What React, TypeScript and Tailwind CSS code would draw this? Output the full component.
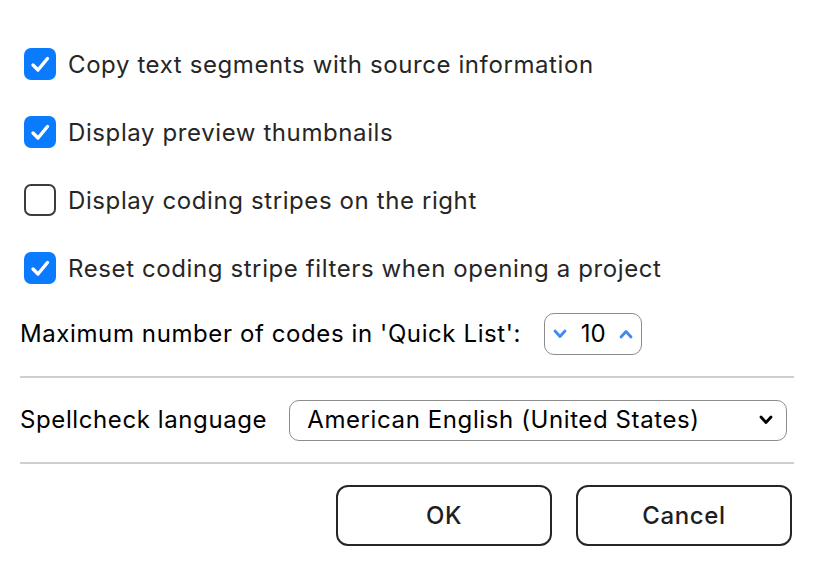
import React, { useState } from "react";

const font = { fontFamily: "Inter, 'Noto Sans', sans-serif" };

const Check = ({ checked, onClick }: { checked: boolean; onClick: () => void }) => (
  <div
    onClick={onClick}
    className={
      checked
        ? "flex h-8 w-8 shrink-0 cursor-pointer items-center justify-center rounded-[7px] bg-[#0a7aff]"
        : "h-8 w-8 shrink-0 cursor-pointer rounded-[7px] border-2 border-[#3c3c3c] bg-white"
    }
  >
    {checked && (
      <svg width="24" height="24" viewBox="0 0 24 24" fill="none">
        <polyline
          points="5,13 10,18 19.5,6.5"
          stroke="white"
          strokeWidth="3.4"
          strokeLinecap="round"
          strokeLinejoin="round"
        />
      </svg>
    )}
  </div>
);

const Chevron = ({ up, className, w = 14 }: { up?: boolean; className: string; w?: number }) => (
  <svg width={w} height="10" viewBox="0 0 14 10" fill="none" className={className}>
    <polyline
      points={up ? "2,8 7,2.5 12,8" : "2,2 7,7.5 12,2"}
      stroke="currentColor"
      strokeWidth="2.8"
      strokeLinecap="round"
      strokeLinejoin="round"
    />
  </svg>
);

const App = () => {
  const [opts, setOpts] = useState([
    { label: "Copy text segments with source information", on: true },
    { label: "Display preview thumbnails", on: true },
    { label: "Display coding stripes on the right", on: false },
    { label: "Reset coding stripe filters when opening a project", on: true },
  ]);
  const [count, setCount] = useState(10);

  const toggle = (i: number) =>
    setOpts(opts.map((o, j) => (j === i ? { ...o, on: !o.on } : o)));

  return (
    <div
      className="h-[574px] w-[816px] bg-white pl-5 pr-[22px] pt-[30px] tracking-[0.6px]"
      style={font}
    >
      {opts.map((o, i) => (
        <div key={o.label} className="flex h-[68px] items-center gap-3 pl-1">
          <Check checked={o.on} onClick={() => toggle(i)} />
          <span className="pt-[2px] text-[24px] text-[#262626]">{o.label}</span>
        </div>
      ))}

      <div className="flex h-[64px] items-center gap-[23px]">
        <span className="text-[24px] text-black">Maximum number of codes in 'Quick List':</span>
        <div className="flex h-[42px] w-[98px] items-center justify-between rounded-[10px] border border-[#8c8c8c] px-[8px]">
          <button onClick={() => setCount(Math.max(1, count - 1))}>
            <Chevron className="text-[#3d8af5]" />
          </button>
          <span className="text-[24px] tracking-normal text-black">{count}</span>
          <button onClick={() => setCount(count + 1)}>
            <Chevron up className="text-[#3d8af5]" />
          </button>
        </div>
      </div>

      <div className="mt-[10px] h-[2px] bg-[#cfcfcf]" />

      <div className="flex h-[84px] items-center gap-[22px]">
        <span className="text-[24px] text-black">Spellcheck language</span>
        <div className="flex h-[41px] w-[498px] items-center justify-between rounded-[10px] border border-[#8c8c8c] pl-[17px] pr-[12px]">
          <span className="text-[24px] text-black">American English (United States)</span>
          <Chevron className="text-black" w={16} />
        </div>
      </div>

      <div className="h-[2px] bg-[#cfcfcf]" />

      <div className="mt-[21px] flex justify-end gap-6 pr-[2px]">
        <button className="h-[61px] w-[216px] rounded-[12px] border-2 border-[#262626] text-[24px] font-medium text-[#1f1f1f]">
          OK
        </button>
        <button className="h-[61px] w-[216px] rounded-[12px] border-2 border-[#262626] text-[24px] font-medium text-[#1f1f1f]">
          Cancel
        </button>
      </div>
    </div>
  );
};

export default App;
